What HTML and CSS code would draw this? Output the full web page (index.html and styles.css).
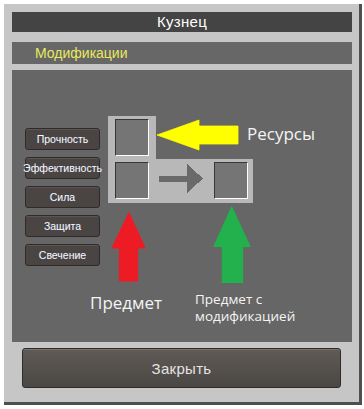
FILE: index.html
```html
<!DOCTYPE html>
<html lang="ru">
<head>
<meta charset="utf-8">
<title>Кузнец</title>
<link rel="stylesheet" href="styles.css">
</head>
<body>
<div class="frame">
  <div class="title">Кузнец</div>
  <div class="tabbar">Модификации</div>
  <div class="panel">
    <div class="modlist">
      <button class="mod">Прочность</button>
      <button class="mod">Эффективность</button>
      <button class="mod">Сила</button>
      <button class="mod">Защита</button>
      <button class="mod">Свечение</button>
    </div>
    <div class="slots">
      <div class="slots-top"><div class="slot"></div></div>
      <div class="slots-bottom">
        <div class="slot"></div>
        <svg class="craft-arrow" width="44" height="44" viewBox="0 0 44 44" shape-rendering="crispEdges">
          <rect x="0" y="17" width="29" height="6" fill="#6a6a6a"/>
          <polygon points="28,5 44,19.5 28,34" fill="#6a6a6a"/>
        </svg>
        <div class="slot slot-result"></div>
      </div>
    </div>
    <div class="notes">
      <svg class="notes-svg" width="340" height="272" viewBox="0 0 340 272">
        <polygon points="145,65 187,50 187,56 226,56 226,74 187,74 187,80" fill="#ffff00" stroke="#ffff00" stroke-width="0.8" stroke-linejoin="round"/>
        <polygon points="117,143 100,178 107.5,178 107.5,211 125.5,211 125.5,178 133,178" fill="#ed1c24" stroke="#ed1c24" stroke-width="1.2" stroke-linejoin="round"/>
        <polygon points="219.7,137 202,176.5 210.3,176.5 210.3,212.5 230.5,212.5 230.5,176.5 238,176.5" fill="#22b14c" stroke="#22b14c" stroke-width="1.2" stroke-linejoin="round"/>
      </svg>
      <span class="note note-res">Ресурсы</span>
      <span class="note note-item">Предмет</span>
      <span class="note note-result"><span class="note-line">Предмет с</span><span class="note-line">модификацией</span></span>
    </div>
  </div>
  <button class="close">Закрыть</button>
</div>
</body>
</html>
```
FILE: styles.css
```css
html, body {
  margin: 0;
  padding: 0;
  background: #ffffff;
}

body {
  width: 364px;
  height: 409px;
  overflow: hidden;
  font-family: "Liberation Sans", Arial, sans-serif;
}

.frame {
  margin: 4px 0 0 4px;
  width: 358px;
  height: 401px;
  box-sizing: border-box;
  background: #c6c6c6;
  border-right: 3px solid #4e4e4e;
  border-bottom: 3px solid #4e4e4e;
  padding: 8px 7px 0 8px;
  display: flex;
  flex-direction: column;
}

.title {
  height: 20px;
  background: #444444;
  color: #ffffff;
  font-size: 15px;
  font-weight: normal;
  line-height: 19px;
  text-align: center;
  letter-spacing: 0.3px;
}

.tabbar {
  margin-top: 10px;
  height: 22px;
  background: #676767;
  color: #e9e95c;
  font-size: 14px;
  line-height: 22px;
  padding-left: 23px;
}

.panel {
  position: relative;
  margin-top: 6px;
  height: 272px;
  box-sizing: border-box;
  background: #666666;
  padding: 46px 0 0 13px;
  display: flex;
  align-items: flex-start;
}

.modlist {
  margin-top: 12px;
  width: 75px;
  display: flex;
  flex-direction: column;
  gap: 7px;
}

.mod {
  width: 75px;
  height: 22px;
  padding: 0;
  box-sizing: border-box;
  background: #4a4543;
  border: 1px solid #2e2b2a;
  border-radius: 3px;
  box-shadow: inset 0 1px 0 #5b5653;
  color: #f6f6f6;
  font-family: "Liberation Sans", Arial, sans-serif;
  font-size: 10.5px;
  line-height: 20px;
  white-space: nowrap;
  text-align: center;
  overflow: visible;
  display: flex;
  justify-content: center;
  text-shadow: 0 0 1px rgba(120, 160, 255, 0.35);
}

.slots {
  margin-left: 8px;
  display: flex;
  flex-direction: column;
  align-items: flex-start;
}

.slots-top {
  width: 48px;
  height: 43px;
  box-sizing: border-box;
  background: #b8b8b8;
  padding: 3px 0 0 7px;
}

.slots-bottom {
  width: 145px;
  height: 44px;
  box-sizing: border-box;
  background: #b8b8b8;
  padding: 3px 0 0 7px;
  display: flex;
  align-items: flex-start;
}

.slot {
  width: 34px;
  height: 37px;
  box-sizing: border-box;
  background: #757575;
  border-top: 1px solid #373737;
  border-left: 1px solid #373737;
  border-right: 1px solid #ffffff;
  border-bottom: 1px solid #ffffff;
}

.craft-arrow {
  display: block;
  margin-left: 10px;
  margin-top: -3px;
}

.slot-result {
  margin-left: 11px;
}

.notes {
  position: absolute;
  inset: 0;
  pointer-events: none;
}

.notes-svg {
  position: absolute;
  left: 0;
  top: 0;
}

.note {
  position: absolute;
  font-family: "Open Sans", "Noto Sans", sans-serif;
  color: #f4f4f4;
  white-space: nowrap;
}

.note-res {
  left: 235px;
  top: 55px;
  font-size: 17px;
  line-height: 17px;
}

.note-item {
  left: 78px;
  top: 224px;
  font-size: 17px;
  line-height: 17px;
}

.note-result {
  left: 183px;
  top: 221px;
  font-size: 13.5px;
  line-height: 16px;
  display: flex;
  flex-direction: column;
  gap: 1px;
}

.note-line {
  display: block;
}

.close {
  margin: 6px 11px 0 10px;
  height: 40px;
  box-sizing: border-box;
  background: linear-gradient(#5f5a56, #4b4744);
  border: 1px solid #2e2c2b;
  border-radius: 3px;
  box-shadow: inset 0 1px 0 #7a7470;
  color: #e4e4e4;
  font-family: "Liberation Sans", Arial, sans-serif;
  font-size: 15px;
  letter-spacing: 0.3px;
  padding: 0;
}
```
